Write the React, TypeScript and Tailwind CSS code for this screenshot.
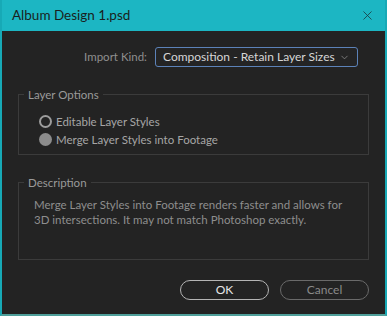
import { ChevronDown, X } from "lucide-react";

const font = { fontFamily: 'Lato, "Open Sans", sans-serif' };

export default function App() {
  return (
    <div
      className="w-[387px] h-[316px] flex flex-col bg-[#232323] border-x-2 border-b-2 border-x-[#17a9b6] border-b-[#4f9f9a] overflow-hidden"
      style={font}
    >
      {/* Title bar */}
      <div className="h-[31px] bg-[#1cb6c3] flex items-center justify-between pl-[10px] pr-[10px] shrink-0">
        <span className="text-[13.5px] text-[#1a1f20]">Album Design 1.psd</span>
        <X size={15} strokeWidth={1.3} className="text-[#1a3c40]" />
      </div>

      {/* Import kind */}
      <div className="flex items-center justify-end gap-[8px] pr-[27px] mt-[16px]">
        <span className="text-[11.5px] text-[#8f8f8f]">Import Kind:</span>
        <div className="w-[203px] h-[20px] border border-[#5c82b8] rounded-[3px] flex items-center justify-between pl-[7px] pr-[7px] bg-[#242424]">
          <span className="text-[12px] text-[#d6d6d6] whitespace-nowrap">Composition - Retain Layer Sizes</span>
          <ChevronDown size={11} strokeWidth={1.5} className="text-[#9a9a9a]" />
        </div>
      </div>

      {/* Layer options */}
      <fieldset className="mx-[16px] mt-[19px] h-[69px] border border-[#3b3b3b]">
        <legend className="ml-[5px] px-[4px] text-[11.5px] text-[#9a9a9a]">Layer Options</legend>
        <div className="flex flex-col mt-[9px] pl-[20px]">
          <div className="flex items-center gap-[4px] h-[18px]">
            <span className="w-[13px] h-[13px] rounded-full border-2 border-[#9c9c9c]" />
            <span className="text-[11.5px] text-[#a6a6a6]">Editable Layer Styles</span>
          </div>
          <div className="flex items-center gap-[4px] h-[18px]">
            <span className="w-[13px] h-[13px] rounded-full bg-[#8c8c8c]" />
            <span className="text-[11.5px] text-[#a6a6a6]">Merge Layer Styles into Footage</span>
          </div>
        </div>
      </fieldset>

      {/* Description */}
      <fieldset className="mx-[16px] mt-[19px] h-[86px] border border-[#3b3b3b]">
        <legend className="ml-[5px] px-[4px] text-[11.5px] text-[#9a9a9a]">Description</legend>
        <p className="mt-[6px] pl-[15px] text-[11.5px] leading-[15px] text-[#8e8e8e] whitespace-nowrap">
          Merge Layer Styles into Footage renders faster and allows for
          <br />
          3D intersections. It may not match Photoshop exactly.
        </p>
      </fieldset>

      {/* Buttons */}
      <div className="flex justify-end gap-[11px] pr-[16px] mt-[20px]">
        <button className="w-[89px] h-[20px] rounded-full border border-[#b4b4b4] text-[12px] text-[#e6e6e6] leading-none">
          OK
        </button>
        <button className="w-[89px] h-[20px] rounded-full border border-[#6a6a6a] text-[12px] text-[#8a8a8a] leading-none">
          Cancel
        </button>
      </div>
    </div>
  );
}
